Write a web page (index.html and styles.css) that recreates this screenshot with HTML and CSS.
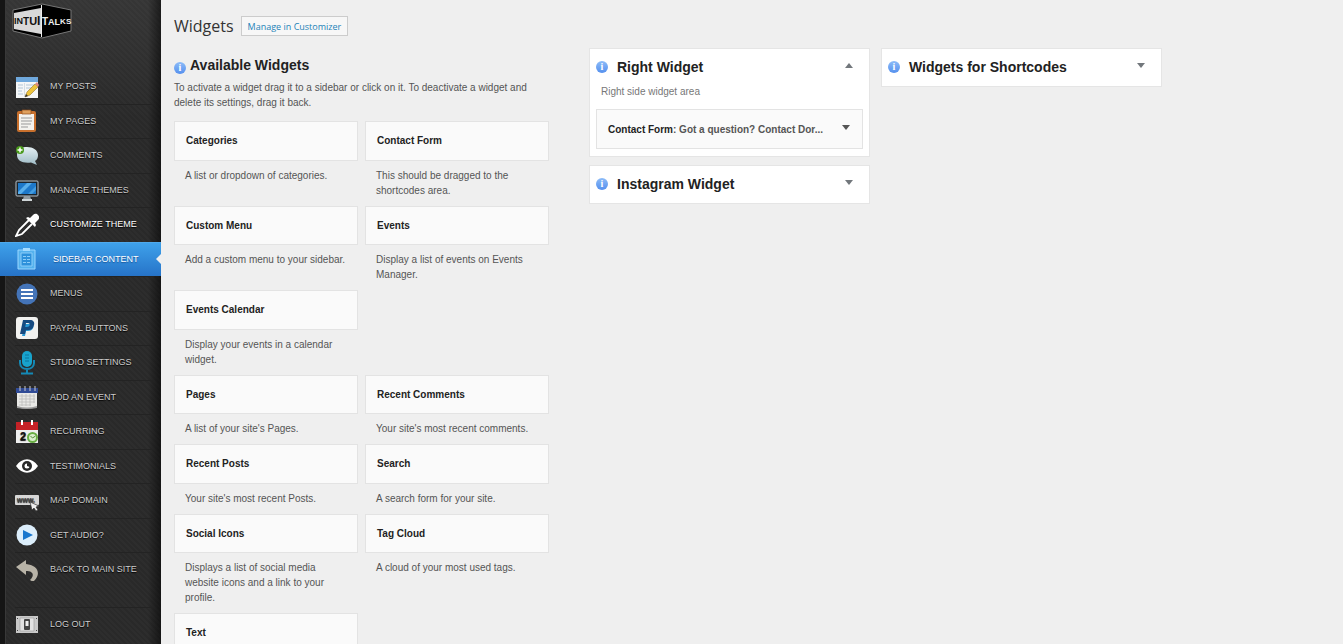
FILE: index.html
```html
<!DOCTYPE html>
<html lang="en">
<head>
    <meta charset="UTF-8">
    <title>Widgets</title>
    <link rel="stylesheet" href="styles.css">
</head>
<body>
    <aside class="sidebar">
        <a class="logo" href="#" aria-label="Intui Talks">
            <svg width="60" height="36" viewBox="0 0 60 36">
                <path d="M1 7L30 1L59 7V28L30 35L1 28Z" fill="#000" stroke="#777" stroke-width="1"/>
                <path d="M2 10L29 5V31L2 26Z" fill="#d8d8d8"/>
                <path d="M29.500 2V34" stroke="#eee"/>
                <text x="2" y="21" class="logo-text logo-dark"><tspan font-size="9">I</tspan><tspan font-size="9">N</tspan><tspan font-size="10" dy="1">T</tspan><tspan font-size="11">U</tspan><tspan font-size="12">I</tspan></text>
                <text x="30" y="22" class="logo-text logo-light"><tspan font-size="10">T</tspan><tspan font-size="9">A</tspan><tspan font-size="9">L</tspan><tspan font-size="8" dy="-1">K</tspan><tspan font-size="8">S</tspan></text>
            </svg>
        </a>
        <nav>
            <ul class="menu">
                <li><a href="#">
                    <svg width="24" height="24" viewBox="0 0 24 24"><path d="M1 2h22v21H1z" fill="#f5f7f8"/><path d="M1 2h22v5H1z" fill="#6fa8dc"/><path d="M3 10h5M3 13h5M3 16h4M3 19h5M11 10h9M11 13h6" stroke="#b3c7d8"/><path d="M9.500 8v14" stroke="#d5dde3"/><path d="M10 22l2-5 8-8 3 3-8 8z" fill="#edc43c" stroke="#98762b" stroke-width=".6"/><path d="M20 9l2-2 2 3-1 2z" fill="#dd8b80"/><path d="M10 22l1-3 2 2z" fill="#333"/></svg>
                    MY POSTS</a></li>
                <li><a href="#">
                    <svg width="24" height="24" viewBox="0 0 24 24"><rect x="2" y="2" width="19" height="21" rx="2" fill="#c8702d"/><path d="M4 5h15v16H4z" fill="#f4f2ee"/><path d="M7 1h9v4H7z" fill="#e0a05d" stroke="#8c4a1b" stroke-width=".7"/><path d="M6 9h11M6 12h11M6 15h10M6 18h7" stroke="#999"/></svg>
                    MY PAGES</a></li>
                <li><a href="#">
                    <svg width="24" height="24" viewBox="0 0 24 24"><defs><linearGradient id="bubble" x2="0" y2="1"><stop stop-color="#e4eff3"/><stop offset="1" stop-color="#9fbcc6"/></linearGradient></defs><path d="M12 3c6 0 11 3 11 8 0 3-1 5-3 6l2 4-6-2.500C7 19.500 2 16.500 2 11s4-8 10-8z" fill="url(#bubble)"/><circle cx="5" cy="6" r="4" fill="#4a9a1d"/><path d="M5 3.500v5M2.500 6h5" stroke="#fff" stroke-width="1.500"/></svg>
                    COMMENTS</a></li>
                <li><a href="#">
                    <svg width="24" height="24" viewBox="0 0 24 24"><rect x="1" y="3" width="22" height="15" rx="1" fill="#1b252d" stroke="#b9c2c8"/><path d="M3 5h18v11H3z" fill="#1d78c9"/><path d="M3 14L12 5h5L6 16H3z" fill="#58aeeb"/><path d="M13 16l8-8v4l-4 4z" fill="#429be0"/><path d="M9 18h6l1 3H8z" fill="#929ba0"/><path d="M7 21h10v2H7z" fill="#cfd5d7"/></svg>
                    MANAGE THEMES</a></li>
                <li class="highlight"><a href="#">
                    <svg width="24" height="24" viewBox="0 0 24 24"><path d="M14 7L4 17l-3 6 6-2 10-10" fill="none" stroke="#fff" stroke-width="1.800"/><path d="M11 5l2-1 2 1 3-3c2-2 4-1 5 0s2 3 0 5l-3 3 1 2-1 2z" fill="#fff"/></svg>
                    CUSTOMIZE THEME</a></li>
                <li class="active"><a href="#">
                    <svg width="24" height="24" viewBox="0 0 24 24"><path d="M3 3h17v19H3z" fill="#55b2ee" stroke="#9bd7ff"/><path d="M6 6h11v13H6z" fill="#2e91db" stroke="#8ccdf8"/><path d="M8 1h7v3H8z" fill="#a6dcff"/><path d="M8 9.500h3M12 9.500h3M8 12.500h3M12 12.500h3M8 15.500h3M12 15.500h3" stroke="#8ccdf8"/></svg>
                    SIDEBAR CONTENT</a></li>
                <li><a href="#">
                    <svg width="24" height="24" viewBox="0 0 24 24"><circle cx="12" cy="12" r="10.500" fill="#4474b8"/><path d="M6 8h12M6 12h12M6 16h12" stroke="#fff" stroke-width="2"/></svg>
                    MENUS</a></li>
                <li><a href="#">
                    <svg width="24" height="24" viewBox="0 0 24 24"><rect x="1" y="1" width="22" height="22" rx="3" fill="#f1f1ef"/><path d="M10 8h7c3 2 1 7-4 7h-2l-1 5H7z" fill="#2997d4"/><path fill-rule="evenodd" d="M8 4h7c3 0 5 2 4 5-1 4-3 5-6 5h-2l-1 4H5zM11 7l-.8 4H12c3 0 4-4 1-4z" fill="#164a80"/></svg>
                    PAYPAL BUTTONS</a></li>
                <li><a href="#">
                    <svg width="24" height="24" viewBox="0 0 24 24"><rect x="7" y="0" width="10" height="16" rx="5" fill="#18a3cc"/><path d="M10 4h4M10 7h4M10 10h4" stroke="#08739c"/><path d="M5 9v3c0 8 14 8 14 0V9M12 18v4M6 22.500h12" fill="none" stroke="#1489b5" stroke-width="2"/></svg>
                    STUDIO SETTINGS</a></li>
                <li><a href="#">
                    <svg width="24" height="24" viewBox="0 0 24 24"><path d="M2 4h20v18q-10 3-20 0z" fill="#e9e9e7"/><path d="M1 3h22v5H1z" fill="#304b96"/><path d="M5 1v5M10 1v5M15 1v5M20 1v5" stroke="#ccc"/><path d="M4 11h16M4 14h16M4 17h16M4 20h12M7 9v12M11 9v12M15 9v12M19 9v9" stroke="#bbb" stroke-width=".8"/><path d="M2 21q10 3 20 0v2q-10 2-20 0z" fill="#999"/></svg>
                    ADD AN EVENT</a></li>
                <li><a href="#">
                    <svg width="24" height="24" viewBox="0 0 24 24"><path d="M1 3h22v20H1z" fill="#eee"/><path d="M1 2h22v8H1z" fill="#c52227"/><path d="M7 0v5M17 0v5" stroke="#fff" stroke-width="2"/><text x="5" y="20" class="calendar-number">2</text><circle cx="17.500" cy="17.500" r="5.500" fill="#68ad43"/><circle cx="17.500" cy="17.500" r="3.500" fill="#d9efcc"/><path d="M15.500 16l2 2 3-2" fill="none" stroke="#568c38"/></svg>
                    RECURRING</a></li>
                <li><a href="#">
                    <svg width="24" height="24" viewBox="0 0 24 24"><path d="M1 12C7 3 17 3 23 12c-6 9-16 9-22 0z" fill="#fff"/><circle cx="12" cy="12" r="5" fill="#292929"/><circle cx="12" cy="12" r="2.500" fill="#fff"/><path d="M12 12V9l3 1v3z" fill="#292929"/></svg>
                    TESTIMONIALS</a></li>
                <li><a href="#">
                    <svg width="24" height="24" viewBox="0 0 24 24"><rect x="0" y="6" width="24" height="10" rx="1" fill="#d7d7d7"/><text x="2" y="13" class="www">www.</text><path d="M15 13l2 8 2-2 2 3 2-1-2-3 3-1z" fill="#eee" stroke="#333" stroke-width=".7"/></svg>
                    MAP DOMAIN</a></li>
                <li><a href="#">
                    <svg width="24" height="24" viewBox="0 0 24 24"><circle cx="12" cy="12" r="10.500" fill="#dceefb"/><path d="M8 7l10 5-10 5z" fill="#1977ce"/></svg>
                    GET AUDIO?</a></li>
                <li><a href="#">
                    <svg width="24" height="24" viewBox="0 0 24 24"><path d="M1 9l10-7v4c11 1 16 9 8 17-2 0-3 0-4-1 5-5 3-9-4-9v4z" fill="#b8b3a7"/></svg>
                    BACK TO MAIN SITE</a></li>
                <li class="logout"><a href="#">
                    <svg width="24" height="24" viewBox="0 0 24 24"><path d="M1 4h22v17H1z" fill="#c9c9c9"/><path d="M5 6h14v13H5z" fill="#e2e2e2" stroke="#999" stroke-width=".6"/><rect x="9" y="7" width="6" height="11" rx="1" fill="#444"/><path d="M10.500 9h3v5h-3z" fill="#eee"/><path d="M2.500 6v1M2.500 18v1M21.500 6v1M21.500 18v1" stroke="#444"/></svg>
                    LOG OUT</a></li>
            </ul>
        </nav>
    </aside>

    <main class="content">
        <header class="page-header">
            <h1>Widgets</h1>
            <a class="customizer" href="#">Manage in Customizer</a>
        </header>

        <div class="columns">
            <section class="available">
                <h2><i class="info">i</i>Available Widgets</h2>
                <p class="intro">To activate a widget drag it to a sidebar or click on it. To deactivate a widget and delete its settings, drag it back.</p>

                <div class="widget-row">
                    <div class="widget"><h3>Categories</h3><p>A list or dropdown of categories.</p></div>
                    <div class="widget"><h3>Contact Form</h3><p>This should be dragged to the shortcodes area.</p></div>
                </div>
                <div class="widget-row">
                    <div class="widget"><h3>Custom Menu</h3><p>Add a custom menu to your sidebar.</p></div>
                    <div class="widget"><h3>Events</h3><p>Display a list of events on Events Manager.</p></div>
                </div>
                <div class="widget-row">
                    <div class="widget"><h3>Events Calendar</h3><p>Display your events in a calendar widget.</p></div>
                </div>
                <div class="widget-row">
                    <div class="widget"><h3>Pages</h3><p>A list of your site's Pages.</p></div>
                    <div class="widget"><h3>Recent Comments</h3><p>Your site's most recent comments.</p></div>
                </div>
                <div class="widget-row">
                    <div class="widget"><h3>Recent Posts</h3><p>Your site's most recent Posts.</p></div>
                    <div class="widget"><h3>Search</h3><p>A search form for your site.</p></div>
                </div>
                <div class="widget-row">
                    <div class="widget"><h3>Social Icons</h3><p>Displays a list of social media website icons and a link to your profile.</p></div>
                    <div class="widget"><h3>Tag Cloud</h3><p>A cloud of your most used tags.</p></div>
                </div>
                <div class="widget-row">
                    <div class="widget"><h3>Text</h3></div>
                </div>
            </section>

            <section class="areas">
                <div class="area-column">
                    <div class="area">
                        <div class="area-title">
                            <i class="info">i</i><h2>Right Widget</h2>
                            <button class="toggle up" aria-label="Close Right Widget"></button>
                        </div>
                        <p class="area-text">Right side widget area</p>
                        <div class="placed">
                            <h3>Contact Form<span>: Got a question? Contact Dor...</span></h3>
                            <button class="toggle" aria-label="Edit Contact Form"></button>
                        </div>
                    </div>
                    <div class="area">
                        <div class="area-title">
                            <i class="info">i</i><h2>Instagram Widget</h2>
                            <button class="toggle" aria-label="Open Instagram Widget"></button>
                        </div>
                    </div>
                </div>
                <div class="area-column">
                    <div class="area">
                        <div class="area-title">
                            <i class="info">i</i><h2>Widgets for Shortcodes</h2>
                            <button class="toggle" aria-label="Open Widgets for Shortcodes"></button>
                        </div>
                    </div>
                </div>
            </section>
        </div>
    </main>
</body>
</html>
```
FILE: styles.css
```css
* {
    box-sizing: border-box;
}

body {
    margin: 0;
    display: flex;
    height: 100vh;
    overflow: hidden;
    background: #efefef;
    color: #555;
    font-family: "Liberation Sans", Arial, sans-serif;
    font-size: 10px;
    line-height: 15px;
}

h1, h2, h3, p, ul {
    margin: 0;
    padding: 0;
}

a {
    text-decoration: none;
}

/* sidebar */
.sidebar {
    flex: none;
    width: 161px;
    background:
        linear-gradient(90deg, #151515 5px, #383838 5px, #383838 6px, transparent 6px, transparent 148px, rgba(0,0,0,0.5)),
        linear-gradient(rgba(255,255,255,0.06), transparent 120px),
        repeating-linear-gradient(45deg, #292929 0, #292929 2px, #2d2d2d 2px, #2d2d2d 4px);
}

.logo {
    display: block;
    height: 69px;
    padding: 3px 0 0 12px;
}

.logo svg {
    display: block;
}

.logo-text {
    font-weight: bold;
}

.logo-dark {
    fill: #111;
}

.logo-light {
    fill: #eee;
}

.menu {
    list-style: none;
}

.menu a {
    display: flex;
    align-items: center;
    gap: 11px;
    height: 34px;
    padding: 0 0 1px 15px;
    border-top: 1px solid transparent;
    color: #ccc;
    font-size: 9px;
    text-shadow: 0 1px 1px #000;
}

.menu li:nth-child(odd) a {
    height: 35px;
}

.menu li + li a {
    border-image: linear-gradient(90deg, transparent 10%, #232323 10%, #232323 95%, transparent 95%) 1;
}

.menu svg {
    flex: none;
}

.menu .highlight a {
    color: #fff;
}

.menu .active a {
    gap: 14px;
    background: linear-gradient(#3ea1ea, #2673c8);
    border-image: none;
    border-top-color: #4fa9eb;
    color: #fff;
    text-shadow: 0 1px 1px #1b5798;
}

.menu .active a::after {
    content: "";
    margin-left: auto;
    border: 5px solid transparent;
    border-left: 0;
    border-right-color: #efefef;
}

.menu .logout {
    margin-top: 20px;
}

.calendar-number {
    font-size: 11px;
    font-weight: bold;
    fill: #111;
}

.www {
    font-size: 7px;
    font-weight: bold;
    fill: #444;
}

/* content */
.content {
    flex: 1;
    min-width: 0;
    padding: 16px 13px 0;
}

.page-header {
    display: flex;
    align-items: center;
    gap: 7px;
    height: 20px;
}

h1 {
    color: #333;
    font-family: "Open Sans", sans-serif;
    font-size: 16px;
    font-weight: 400;
    line-height: 20px;
}

.customizer {
    padding: 2px 6px 0;
    border: 1px solid #ccc;
    background: #f7f7f7;
    color: #2483b8;
    font-family: "Open Sans", sans-serif;
    font-size: 9px;
    line-height: 16px;
}

.columns {
    display: flex;
    gap: 40px;
    padding-top: 12px;
}

.available {
    flex: 0 1 375px;
    padding-top: 7px;
}

h2 {
    color: #222;
    font-size: 14px;
    line-height: 20px;
}

.available h2 {
    display: flex;
    align-items: center;
    gap: 4px;
}

.info {
    flex: none;
    width: 12px;
    height: 12px;
    border-radius: 50%;
    background: linear-gradient(#8dbcf8, #5590ee);
    color: #fff;
    font-family: "Liberation Serif", serif;
    font-size: 10px;
    font-style: normal;
    font-weight: bold;
    line-height: 12px;
    text-align: center;
}

.available .info {
    margin-top: 5px;
}

.intro {
    padding: 5px 0 11px;
}

.widget-row {
    display: grid;
    grid-template-columns: 1fr 1fr;
    gap: 7px;
}

.widget h3 {
    height: 40px;
    padding: 0 11px;
    border: 1px solid #e3e3e3;
    background: #fafafa;
    color: #222;
    font-size: 10px;
    line-height: 37px;
}

.widget-row:nth-of-type(even) h3 {
    height: 39px;
}

.widget p {
    padding: 7px 8px 8px 11px;
}

.areas {
    flex: 1;
    display: flex;
    align-items: flex-start;
    gap: 11px;
}

.area-column {
    flex: 0 1 281px;
}

.area {
    margin-bottom: 8px;
    padding: 0 6px 2px;
    border: 1px solid #e5e5e5;
    background: #fff;
}

.area-title {
    display: flex;
    align-items: center;
    gap: 9px;
    height: 35px;
}

.toggle {
    margin: 0 10px 3px auto;
    padding: 0;
    border: 4px solid transparent;
    border-top: 5px solid #72777c;
    border-bottom: 0;
    background: none;
}

.toggle.up {
    border-top: 0;
    border-bottom: 5px solid #72777c;
}

.area-text {
    padding: 0 5px 10px;
    color: #777;
}

.placed {
    display: flex;
    align-items: center;
    height: 40px;
    margin-bottom: 5px;
    padding-left: 11px;
    border: 1px solid #e3e3e3;
    background: #fafafa;
}

.placed h3 {
    color: #222;
    font-size: 10px;
}

.placed h3 span {
    color: #555;
}

.placed .toggle {
    margin-right: 12px;
    border-top-color: #555;
}
```
